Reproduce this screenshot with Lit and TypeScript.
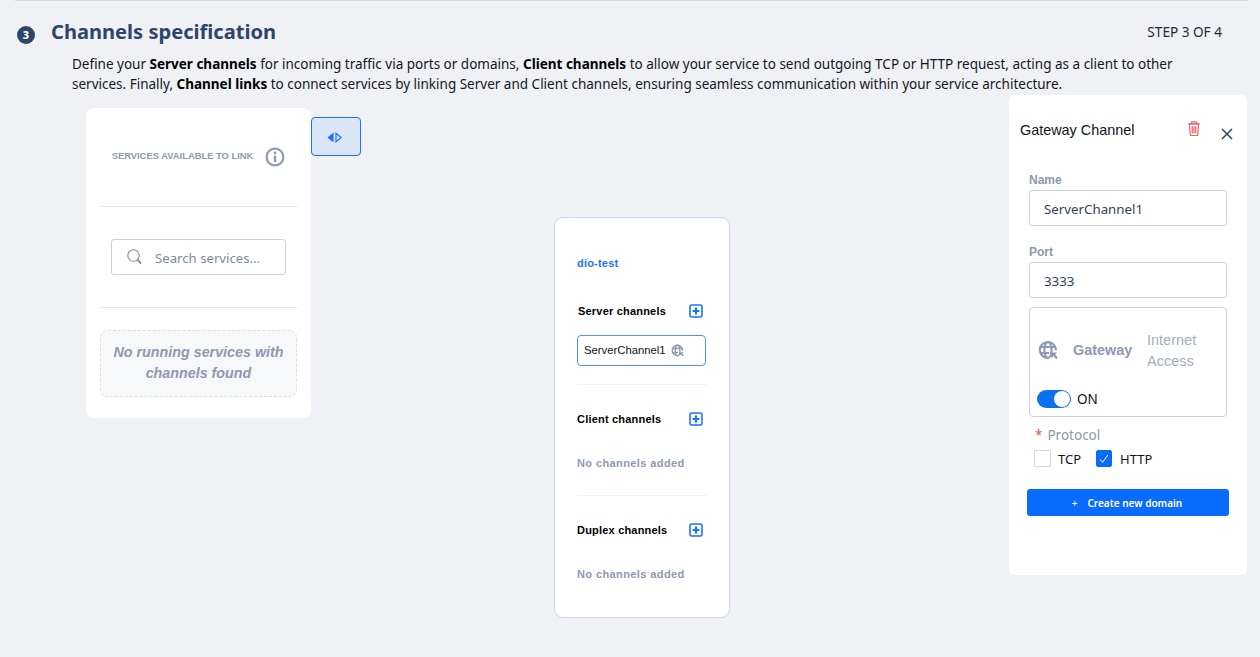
import { LitElement, html, css, svg } from "lit";
import { customElement } from "lit/decorators.js";

const globe = (size: number, color: string) => html`<svg width=${size} height=${size} viewBox="0 0 20 20" fill="none" stroke=${color} stroke-width="2.1">
  <path d="M17.8 10.5A8 8 0 1 0 10.5 17.9" />
  <ellipse cx="10" cy="10" rx="3.6" ry="8"/>
  <path d="M2.6 7h14.8M2.6 13h8.4"/>
  ${svg`<path d="M12.6 12.6h6.6l-2 2 2.6 3.2-1.6 1.4-2.5-3.1-2 2z" fill=${color} stroke="none"/>`}
</svg>`;

const plus = html`<svg class="plus" width="14" height="14" viewBox="0 0 14 14" fill="none">
  <rect x="1" y="1" width="12" height="12" rx="1.5" stroke="#1a73ff" stroke-width="1.6"/>
  <path d="M7 3.6v6.8M3.6 7h6.8" stroke="#1a73ff" stroke-width="2.2"/>
</svg>`;

@customElement("app-root")
export class AppRoot extends LitElement {
  static styles = css`
    :host { display: block; position: relative; width: 1260px; height: 657px; overflow: hidden; background: #eff1f5; font-family: "Noto Sans", sans-serif; color: #000; }
    .rule { height: 1px; margin: 0 12px 0 15px; background: #d9d9d9; }
    .head { display: flex; align-items: flex-start; padding: 16px 38px 0 17px; height: 29px; }
    .step-dot { width: 18px; height: 18px; margin-top: 9px; border-radius: 50%; background: #2d4568; color: #fff; font-size: 11px; font-weight: 800; line-height: 18px; text-align: center; flex: none; }
    h1 { margin: 0 0 0 16px; font-size: 20.1px; line-height: 29px; font-weight: 700; color: #2d4568; flex: 1; }
    .step { font-size: 13.6px; line-height: 29px; color: #1f2a3a; }
    .desc { margin: 7.5px 60px 0 72px; font-size: 13.5px; line-height: 20.6px; color: #14181f; height: 42px; }
    .desc b { font-weight: 700; color: #000; }
    .canvas { display: flex; align-items: flex-start; padding: 12.5px 0 0 86px; }
    .left { width: 225px; height: 310px; box-sizing: border-box; background: #fff; border-radius: 8px; padding: 0 14px; flex: none; }
    .avail { height: 99px; box-sizing: border-box; display: flex; align-items: center; justify-content: center; gap: 11px; border-bottom: 1px solid #e3e5e8; font-family: "Liberation Sans", sans-serif; font-size: 9.4px; font-weight: 700; color: #8d99b3; padding-bottom: 1px; }
    .avail span { margin-top: -2px; }
    .avail svg { margin-left: 1px; }
    .searchwrap { height: 101px; display: flex; align-items: center; justify-content: center; box-sizing: border-box; border-bottom: 1px solid #e3e5e8; }
    .search { width: 175px; height: 36px; box-sizing: border-box; border: 1px solid #cfd1d6; border-radius: 3px; display: flex; align-items: center; gap: 13px; padding-left: 15px; font-size: 13.2px; color: #7d89a3; }
    .search span { padding-top: 2px; }
    .empty { margin-top: 22px; height: 67px; box-sizing: border-box; border: 1px dashed #dcdfe5; border-radius: 8px; background: #f7f8fa; display: flex; align-items: center; justify-content: center; text-align: center; padding-bottom: 2px; font-family: "Liberation Sans", sans-serif; font-size: 14.3px; font-weight: 700; font-style: italic; line-height: 21px; color: #8d99b3; }
    .toggle { width: 50px; height: 39px; margin-top: 9px; box-sizing: border-box; border: 1px solid #1a73ff; border-radius: 4px; background: #dae5f7; display: flex; align-items: center; justify-content: center; padding: 2px 3px 0 0; flex: none; }

    .node { position: absolute; left: 554px; top: 217px; width: 176px; height: 401px; box-sizing: border-box; background: #fff; border: 1px solid #c9d9f3; border-radius: 9px; padding: 0 23px 0 22px; font-family: "Liberation Sans", sans-serif; }
    .node-title { margin-top: 38px; height: 14px; font-size: 11px; font-weight: 700; line-height: 14px; color: #1a73ff; letter-spacing: 0.2px; }
    .sec { display: flex; align-items: center; justify-content: space-between; height: 16px; font-size: 11px; font-weight: 700; letter-spacing: 0.2px; padding-right: 3px; }
    .sec.first { margin-top: 33px; padding-left: 1px; }
    .chan { margin-top: 16px; width: 129px; height: 31px; box-sizing: border-box; border: 1px solid #4a94f2; border-radius: 4px; display: flex; align-items: center; gap: 5px; padding-left: 6px; font-size: 11.3px; color: #0e1420; }
    .chan span { margin-top: -1px; }
    .sep { height: 1px; background: #f0f1f3; }
    .none { margin-top: 29px; height: 14px; font-size: 11px; font-weight: 700; line-height: 14px; color: #8d99b3; letter-spacing: 0.4px; }

    .panel { position: absolute; left: 1009px; top: 95px; width: 238px; height: 480px; box-sizing: border-box; background: #fff; border-radius: 5px; padding: 0 20px; }
    .ptop { display: flex; height: 72px; align-items: flex-start; margin-left: -9px; font-family: "Liberation Sans", sans-serif; font-size: 14.4px; }
    .ptop .t { margin-top: 26px; line-height: 18px; width: 167px; flex: none; color: #0e1420; }
    .ptop svg.trash { margin-top: 26px; flex: none; }
    .ptop svg.x { margin-top: 33px; margin-left: 20px; flex: none; }
    label.l { display: block; font-family: "Liberation Sans", sans-serif; font-size: 12px; font-weight: 700; line-height: 16px; color: #8d99b3; margin-top: 5px; }
    .input { width: 198px; height: 36px; box-sizing: border-box; border: 1px solid #cfd1d6; border-radius: 3px; margin-top: 2px; padding: 2px 0 0 14px; display: flex; align-items: center; font-size: 13.3px; color: #33435c; margin-bottom: 18px; }
    .gw { width: 198px; height: 110px; box-sizing: border-box; border: 1px solid #cfd1d6; border-radius: 4px; margin-top: -9px; padding: 0 7px; font-family: "Liberation Sans", sans-serif; }
    .gw-row { display: flex; align-items: center; height: 65px; margin-top: 9px; padding-left: 1px; }
    .gw-name { font-size: 14.4px; font-weight: 700; color: #8d99b3; margin-left: 15px; width: 74px; }
    .gw-sub { font-size: 14.5px; line-height: 21px; color: #a4adc0; width: 60px; padding-top: 2px; }
    .gw-on { display: flex; align-items: center; gap: 6px; margin-top: 8px; font-family: "Noto Sans", sans-serif; font-size: 13.5px; line-height: 18px; color: #0e1420; }
    .sw { width: 34px; height: 18px; border-radius: 9px; background: #0a72f0; position: relative; box-sizing: border-box; }
    .sw i { position: absolute; right: 1px; top: 1px; width: 16px; height: 16px; border-radius: 50%; background: #fff; }
    .proto { margin: 9px 0 0 6px; font-size: 13.5px; line-height: 19px; color: #8d99b3; display: flex; gap: 5px; }
    .proto em { color: #f05252; font-style: normal; }
    .checks { display: flex; align-items: center; margin: 5px 0 0 5px; height: 17px; font-size: 13px; color: #0e1420; }
    .cb { width: 17px; height: 17px; box-sizing: border-box; border: 1px solid #d5d7dc; border-radius: 1px; margin-right: 7px; display: flex; align-items: center; justify-content: center; flex: none; }
    .cb.on { background: #0a6cf5; border-color: #0a6cf5; border-radius: 2px; width: 16px; margin-right: 8px; }
    .checks .tcp { margin-right: 15px; }
    .btn { margin: 22px 0 0 -2px; width: 202px; height: 27px; background: #0a6cff; border-radius: 3px; color: #fff; font-size: 10px; font-weight: 600; display: flex; align-items: center; justify-content: center; gap: 10px; padding-right: 2px; box-sizing: border-box; }
    .btn span.p { font-size: 10px; font-weight: 400; }
  `;

  render() {
    return html`
      <div class="rule"></div>
      <div class="head">
        <div class="step-dot">3</div>
        <h1>Channels specification</h1>
        <div class="step">STEP 3 OF 4</div>
      </div>
      <p class="desc">Define your <b>Server channels</b> for incoming traffic via ports or domains, <b>Client channels</b> to allow your service to send outgoing TCP or HTTP request, acting as a client to other services. Finally, <b>Channel links</b> to connect services by linking Server and Client channels, ensuring seamless communication within your service architecture.</p>
      <div class="canvas">
        <div class="left">
          <div class="avail">
            <span>SERVICES AVAILABLE TO LINK</span>
            <svg width="20" height="20" viewBox="0 0 20 20" fill="none"><circle cx="10" cy="10" r="8.4" stroke="#8d99b3" stroke-width="2.2"/><circle cx="10" cy="6" r="1.4" fill="#8d99b3"/><rect x="8.8" y="8.6" width="2.4" height="6.4" fill="#8d99b3"/></svg>
          </div>
          <div class="searchwrap">
            <div class="search">
              <svg width="15" height="16" viewBox="0 0 15 16" fill="none"><circle cx="6.5" cy="6.5" r="5.7" stroke="#8a8f98" stroke-width="1.1"/><path d="M10.6 10.8l3.4 3.8" stroke="#7a7f88" stroke-width="1.7"/></svg>
              <span>Search services...</span>
            </div>
          </div>
          <div class="empty"><div>No running services with<br/>channels found</div></div>
        </div>
        <div class="toggle">
          <svg width="15" height="11" viewBox="0 0 15 11"><path d="M6.5 0.5v10L0.5 5.5z" fill="#1a73ff"/><path d="M9 1.2v8.6l5-4.3z" fill="none" stroke="#1a73ff" stroke-width="1.2"/></svg>
        </div>
      </div>

      <div class="node">
        <div class="node-title">dio-test</div>
        <div class="sec first"><span>Server channels</span>${plus}</div>
        <div class="chan"><span>ServerChannel1</span>${globe(13, "#8d99b3")}</div>
        <div class="sep" style="margin-top:18px"></div>
        <div class="sec" style="margin-top:26px"><span>Client channels</span>${plus}</div>
        <div class="none">No channels added</div>
        <div class="sep" style="margin-top:25px"></div>
        <div class="sec" style="margin-top:26px"><span>Duplex channels</span>${plus}</div>
        <div class="none">No channels added</div>
      </div>

      <aside class="panel">
        <div class="ptop">
          <span class="t">Gateway Channel</span>
          <svg class="trash" width="14" height="15" viewBox="0 0 14 16" fill="none" stroke="#f0686c" stroke-width="1.3"><path d="M0.8 3h12.4M4.5 3V1h5v2"/><path d="M2.2 3l.8 11.5c0 .6.4 1 1 1h6c.6 0 1-.4 1-1L11.8 3z"/><path d="M5.2 5.5v7.5M7 5.5v7.5M8.8 5.5v7.5"/></svg>
          <svg class="x" width="12" height="12" viewBox="0 0 12 12"><path d="M1 1l10 10M11 1L1 11" stroke="#2d4568" stroke-width="1.5"/></svg>
        </div>
        <label class="l">Name</label>
        <div class="input">ServerChannel1</div>
        <label class="l" style="margin-top:0">Port</label>
        <div class="input">3333</div>
        <div class="gw">
          <div class="gw-row">
            ${globe(20, "#8d99b3")}
            <span class="gw-name">Gateway</span>
            <span class="gw-sub">Internet Access</span>
          </div>
          <div class="gw-on"><div class="sw"><i></i></div><span>ON</span></div>
        </div>
        <div class="proto"><em>*</em><span>Protocol</span></div>
        <div class="checks">
          <div class="cb"></div><span class="tcp">TCP</span>
          <div class="cb on"><svg width="10" height="10" viewBox="0 0 10 10" fill="none"><path d="M1.2 5.4l2.4 3L8.8 1" stroke="#fff" stroke-width="1"/></svg></div><span>HTTP</span>
        </div>
        <div class="btn"><span class="p">+</span><span>Create new domain</span></div>
      </aside>
    `;
  }
}
